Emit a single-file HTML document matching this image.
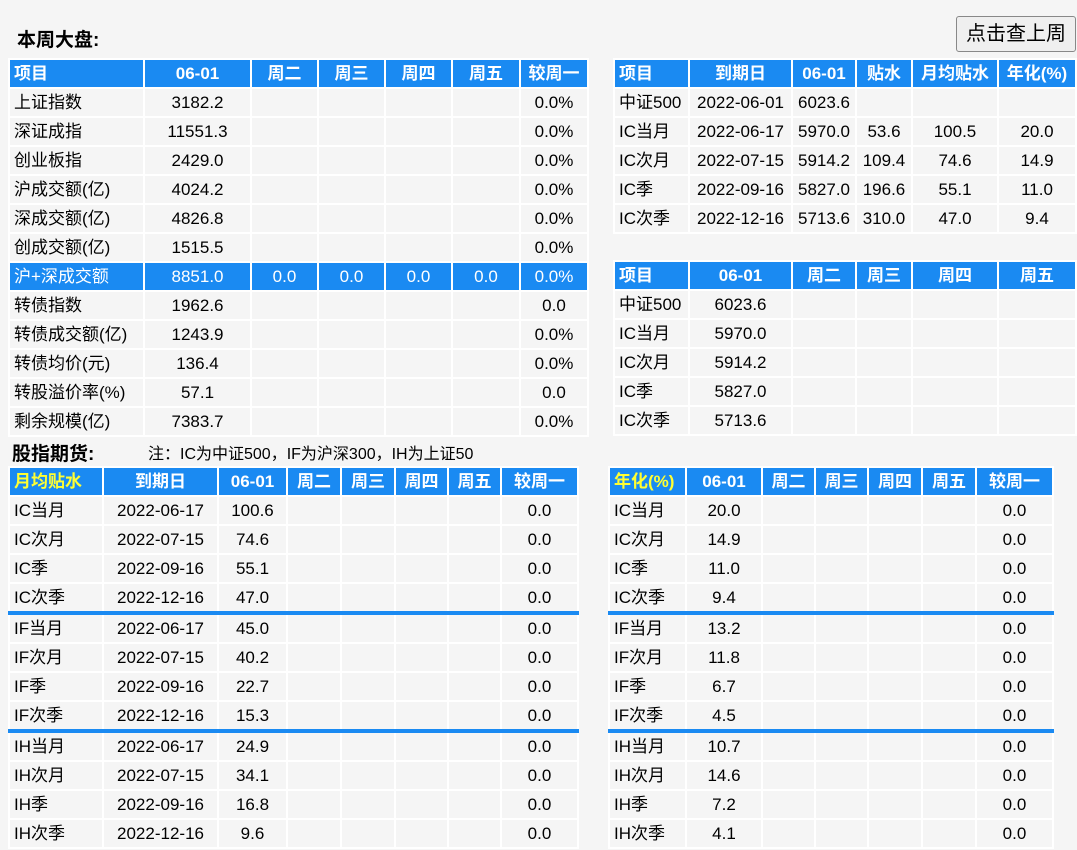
<!DOCTYPE html>
<html><head><meta charset="utf-8"><style>
body{margin:0;background:#f5f5f5;width:1077px;height:850px;overflow:hidden;position:relative;font-family:"Liberation Sans","Noto Sans CJK SC",sans-serif;font-size:17px;color:#000}
table{position:absolute;border-collapse:collapse;table-layout:fixed}
td{border:2px solid #fff;height:27px;padding:0 4px;white-space:nowrap;overflow:hidden;text-align:center;line-height:27px}
td.l{text-align:left}
tr.h td{background:#1a8af2;color:#fff;font-weight:bold}
tr.b td{background:#1a8af2;color:#fff}
tr.sep td{border-top:4px solid #1a8af2}
.y{color:#ffff33!important;text-align:left}
.t{position:absolute;font-weight:bold;font-size:19px}
.btn{position:absolute;left:956px;top:16px;width:118px;height:34px;border:1px solid #888;border-radius:3px;background:#efefef;font-size:20px;line-height:34px;text-align:center}
</style></head><body>
<div class="t" style="left:17px;top:25px">本周大盘:</div>
<div class="btn">点击查上周</div>

<table style="left:8px;top:58px;width:579px">
<colgroup><col style="width:135px"><col style="width:107px"><col style="width:67px"><col style="width:67px"><col style="width:67px"><col style="width:68px"><col style="width:68px"></colgroup>
<tr class="h"><td class="l">项目</td><td>06-01</td><td>周二</td><td>周三</td><td>周四</td><td>周五</td><td>较周一</td></tr>
<tr><td class="l">上证指数</td><td>3182.2</td><td></td><td></td><td></td><td></td><td>0.0%</td></tr>
<tr><td class="l">深证成指</td><td>11551.3</td><td></td><td></td><td></td><td></td><td>0.0%</td></tr>
<tr><td class="l">创业板指</td><td>2429.0</td><td></td><td></td><td></td><td></td><td>0.0%</td></tr>
<tr><td class="l">沪成交额(亿)</td><td>4024.2</td><td></td><td></td><td></td><td></td><td>0.0%</td></tr>
<tr><td class="l">深成交额(亿)</td><td>4826.8</td><td></td><td></td><td></td><td></td><td>0.0%</td></tr>
<tr><td class="l">创成交额(亿)</td><td>1515.5</td><td></td><td></td><td></td><td></td><td>0.0%</td></tr>
<tr class="b"><td class="l">沪+深成交额</td><td>8851.0</td><td>0.0</td><td>0.0</td><td>0.0</td><td>0.0</td><td>0.0%</td></tr>
<tr><td class="l">转债指数</td><td>1962.6</td><td></td><td></td><td></td><td></td><td>0.0</td></tr>
<tr><td class="l">转债成交额(亿)</td><td>1243.9</td><td></td><td></td><td></td><td></td><td>0.0%</td></tr>
<tr><td class="l">转债均价(元)</td><td>136.4</td><td></td><td></td><td></td><td></td><td>0.0%</td></tr>
<tr><td class="l">转股溢价率(%)</td><td>57.1</td><td></td><td></td><td></td><td></td><td>0.0</td></tr>
<tr><td class="l">剩余规模(亿)</td><td>7383.7</td><td></td><td></td><td></td><td></td><td>0.0%</td></tr>
</table>

<table style="left:613px;top:58px;width:462px">
<colgroup><col style="width:75px"><col style="width:103px"><col style="width:64px"><col style="width:56px"><col style="width:86px"><col style="width:78px"></colgroup>
<tr class="h"><td class="l">项目</td><td>到期日</td><td>06-01</td><td>贴水</td><td>月均贴水</td><td>年化(%)</td></tr>
<tr><td class="l">中证500</td><td>2022-06-01</td><td>6023.6</td><td></td><td></td><td></td></tr>
<tr><td class="l">IC当月</td><td>2022-06-17</td><td>5970.0</td><td>53.6</td><td>100.5</td><td>20.0</td></tr>
<tr><td class="l">IC次月</td><td>2022-07-15</td><td>5914.2</td><td>109.4</td><td>74.6</td><td>14.9</td></tr>
<tr><td class="l">IC季</td><td>2022-09-16</td><td>5827.0</td><td>196.6</td><td>55.1</td><td>11.0</td></tr>
<tr><td class="l">IC次季</td><td>2022-12-16</td><td>5713.6</td><td>310.0</td><td>47.0</td><td>9.4</td></tr>
</table>

<table style="left:613px;top:260px;width:462px">
<colgroup><col style="width:75px"><col style="width:103px"><col style="width:64px"><col style="width:56px"><col style="width:86px"><col style="width:78px"></colgroup>
<tr class="h"><td class="l">项目</td><td>06-01</td><td>周二</td><td>周三</td><td>周四</td><td>周五</td></tr>
<tr><td class="l">中证500</td><td>6023.6</td><td></td><td></td><td></td><td></td></tr>
<tr><td class="l">IC当月</td><td>5970.0</td><td></td><td></td><td></td><td></td></tr>
<tr><td class="l">IC次月</td><td>5914.2</td><td></td><td></td><td></td><td></td></tr>
<tr><td class="l">IC季</td><td>5827.0</td><td></td><td></td><td></td><td></td></tr>
<tr><td class="l">IC次季</td><td>5713.6</td><td></td><td></td><td></td><td></td></tr>
</table>

<div class="t" style="left:12px;top:439px">股指期货:</div>
<div style="position:absolute;left:148px;top:440px;font-size:16px">注：IC为中证500，IF为沪深300，IH为上证50</div>

<table style="left:8px;top:466px;width:571px">
<colgroup><col style="width:94px"><col style="width:115px"><col style="width:69px"><col style="width:54px"><col style="width:54px"><col style="width:53px"><col style="width:53px"><col style="width:77px"></colgroup>
<tr class="h"><td class="y">月均贴水</td><td>到期日</td><td>06-01</td><td>周二</td><td>周三</td><td>周四</td><td>周五</td><td>较周一</td></tr>
<tr><td class="l">IC当月</td><td>2022-06-17</td><td>100.6</td><td></td><td></td><td></td><td></td><td>0.0</td></tr>
<tr><td class="l">IC次月</td><td>2022-07-15</td><td>74.6</td><td></td><td></td><td></td><td></td><td>0.0</td></tr>
<tr><td class="l">IC季</td><td>2022-09-16</td><td>55.1</td><td></td><td></td><td></td><td></td><td>0.0</td></tr>
<tr><td class="l">IC次季</td><td>2022-12-16</td><td>47.0</td><td></td><td></td><td></td><td></td><td>0.0</td></tr>
<tr class="sep"><td class="l">IF当月</td><td>2022-06-17</td><td>45.0</td><td></td><td></td><td></td><td></td><td>0.0</td></tr>
<tr><td class="l">IF次月</td><td>2022-07-15</td><td>40.2</td><td></td><td></td><td></td><td></td><td>0.0</td></tr>
<tr><td class="l">IF季</td><td>2022-09-16</td><td>22.7</td><td></td><td></td><td></td><td></td><td>0.0</td></tr>
<tr><td class="l">IF次季</td><td>2022-12-16</td><td>15.3</td><td></td><td></td><td></td><td></td><td>0.0</td></tr>
<tr class="sep"><td class="l">IH当月</td><td>2022-06-17</td><td>24.9</td><td></td><td></td><td></td><td></td><td>0.0</td></tr>
<tr><td class="l">IH次月</td><td>2022-07-15</td><td>34.1</td><td></td><td></td><td></td><td></td><td>0.0</td></tr>
<tr><td class="l">IH季</td><td>2022-09-16</td><td>16.8</td><td></td><td></td><td></td><td></td><td>0.0</td></tr>
<tr><td class="l">IH次季</td><td>2022-12-16</td><td>9.6</td><td></td><td></td><td></td><td></td><td>0.0</td></tr>
</table>

<table style="left:608px;top:466px;width:444px">
<colgroup><col style="width:77px"><col style="width:76px"><col style="width:53px"><col style="width:53px"><col style="width:54px"><col style="width:54px"><col style="width:77px"></colgroup>
<tr class="h"><td class="y">年化(%)</td><td>06-01</td><td>周二</td><td>周三</td><td>周四</td><td>周五</td><td>较周一</td></tr>
<tr><td class="l">IC当月</td><td>20.0</td><td></td><td></td><td></td><td></td><td>0.0</td></tr>
<tr><td class="l">IC次月</td><td>14.9</td><td></td><td></td><td></td><td></td><td>0.0</td></tr>
<tr><td class="l">IC季</td><td>11.0</td><td></td><td></td><td></td><td></td><td>0.0</td></tr>
<tr><td class="l">IC次季</td><td>9.4</td><td></td><td></td><td></td><td></td><td>0.0</td></tr>
<tr class="sep"><td class="l">IF当月</td><td>13.2</td><td></td><td></td><td></td><td></td><td>0.0</td></tr>
<tr><td class="l">IF次月</td><td>11.8</td><td></td><td></td><td></td><td></td><td>0.0</td></tr>
<tr><td class="l">IF季</td><td>6.7</td><td></td><td></td><td></td><td></td><td>0.0</td></tr>
<tr><td class="l">IF次季</td><td>4.5</td><td></td><td></td><td></td><td></td><td>0.0</td></tr>
<tr class="sep"><td class="l">IH当月</td><td>10.7</td><td></td><td></td><td></td><td></td><td>0.0</td></tr>
<tr><td class="l">IH次月</td><td>14.6</td><td></td><td></td><td></td><td></td><td>0.0</td></tr>
<tr><td class="l">IH季</td><td>7.2</td><td></td><td></td><td></td><td></td><td>0.0</td></tr>
<tr><td class="l">IH次季</td><td>4.1</td><td></td><td></td><td></td><td></td><td>0.0</td></tr>
</table>
</body></html>
